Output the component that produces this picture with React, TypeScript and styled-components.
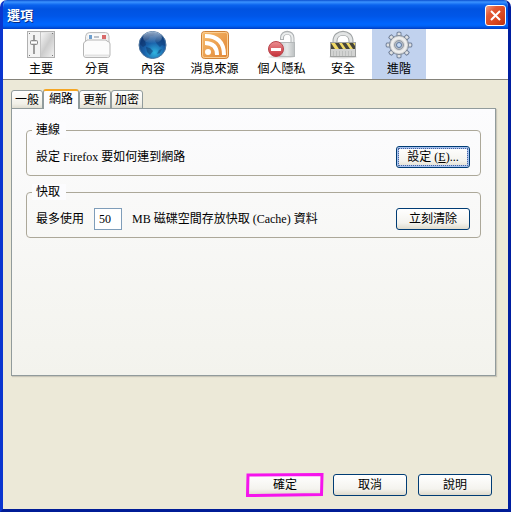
import React from "react";
import styled, { createGlobalStyle, css } from "styled-components";

const GlobalStyle = createGlobalStyle`
  * { box-sizing: border-box; }
  body {
    margin: 0;
    background: #fff;
    color: #000;
    font: 12px/16px "Liberation Serif", "Noto Sans CJK TC", serif;
  }
  button, input { font: inherit; color: inherit; }
`;

const Window = styled.main`
  display: flex;
  flex-direction: column;
  min-height: 100vh;
  background: #ece9d8;
  border: 3px solid #0a35cf;
  border-top: 0;
  border-right-color: #001ea0;
  border-bottom-color: #001c96;
  border-radius: 7px 7px 0 0;
  overflow: hidden;
`;

const TitleBar = styled.header`
  display: flex;
  align-items: center;
  justify-content: space-between;
  height: 29px;
  margin: 0 -3px;
  padding: 2px 5px 0 7px;
  background: linear-gradient(#0a4fd0 0, #3b93ff 2px, #0a63ee 5px, #0053e1 9px, #0056e8 16px, #0066ff 24px, #0062f5 26px, #003dc4 29px);
`;

const Title = styled.h1`
  margin: 0;
  color: #fff;
  font-size: 13px;
  line-height: 18px;
  font-weight: 700;
  text-shadow: 1px 1px 0 #0a2a80;
`;

const CloseButton = styled.button`
  display: grid;
  place-items: center;
  width: 21px;
  height: 21px;
  padding: 0;
  border: 1px solid #fff;
  border-radius: 3px;
  background: linear-gradient(135deg, #f0a088 0, #e25a36 30%, #d9451c 70%, #b83210 100%);
`;

const Toolbar = styled.nav`
  display: flex;
  gap: 2px;
  height: 51px;
  padding-left: 11px;
  background: #fff;
  border-bottom: 1px solid #85837a;
`;

const ToolButton = styled.button<{ $wide?: boolean; $selected?: boolean }>`
  display: flex;
  flex-direction: column;
  align-items: center;
  gap: 1px;
  flex: none;
  width: ${(p) => (p.$wide ? 65 : 54)}px;
  padding: 1px 0 0;
  border: 0;
  background: ${(p) => (p.$selected ? "#c1d2ee" : "transparent")};
  white-space: nowrap;

  svg { display: block; }
`;

const Content = styled.div`
  display: flex;
  flex: 1;
  flex-direction: column;
  padding: 9px 12px 0 8px;
`;

const TabList = styled.div`
  display: flex;
  align-items: flex-end;
  height: 20px;
  margin-bottom: -1px;
`;

const Tab = styled.button<{ $active?: boolean }>`
  height: 19px;
  padding: 0 3px;
  border: 1px solid #919b9c;
  border-radius: 3px 3px 0 0;
  background: linear-gradient(#fff, #f1f0e8 75%, #e0ded2);
  ${(p) =>
    p.$active &&
    css`
      position: relative;
      height: 20px;
      padding: 0 5px 3px;
      border-top: 2px solid #f5a623;
      border-bottom: 0;
      background: #fcfcfe;
    `}
`;

const Panel = styled.section`
  display: flex;
  flex: 1;
  flex-direction: column;
  gap: 8px;
  padding: 13px 14px;
  border: 1px solid #919b9c;
  background: linear-gradient(#fcfcfe, #f3f3ed);
  box-shadow: 1px 1px 1px #c9c6b9;
`;

const Group = styled.fieldset`
  min-width: 0;
  margin: 0;
  padding: 8px 10px 7px 9px;
  border: 1px solid #aca899;
  border-radius: 4px;
`;

const Legend = styled.legend`
  margin-left: -4px;
  padding: 0 6px 0 4px;
  background: #fcfcfe;
`;

const Row = styled.div`
  display: flex;
  align-items: center;
`;

const SizeInput = styled.input`
  width: 28px;
  height: 22px;
  margin: 0 10px;
  padding: 0 4px;
  border: 1px solid #7f9db9;
  border-radius: 0;
  background: #fff;
`;

const PushButton = styled.button<{ $focused?: boolean }>`
  width: 74px;
  height: 22px;
  padding: 0;
  border: 1px solid #003c74;
  border-radius: 3px;
  background: linear-gradient(#fff, #f4f3ee 70%, #dfdbcd);
  white-space: nowrap;
  ${(p) =>
    p.$focused &&
    css`
      box-shadow: inset 0 0 0 2px #a9c3f0;
      outline: 1px dotted #4a66a0;
      outline-offset: -3px;
    `}
`;

const RowButton = styled(PushButton)`
  margin-left: auto;
`;

const Footer = styled.footer`
  display: flex;
  justify-content: flex-end;
  gap: 11px;
  margin-top: 98px;
  padding: 0 16px 13px;
`;

const Marked = styled.div`
  position: relative;
  display: flex;

  svg {
    position: absolute;
    inset: -1px -2px;
    pointer-events: none;
  }
`;

const Plain = styled(PushButton)`
  border-color: transparent;
`;

function MainIcon() {
  return (
    <svg width="30" height="30" viewBox="0 0 30 30" aria-hidden="true">
      <defs>
        <linearGradient id="metal" x2="1" y2="1">
          <stop offset="0" stopColor="#f8f8f8" />
          <stop offset=".5" stopColor="#cccccc" />
          <stop offset="1" stopColor="#f1f1f1" />
        </linearGradient>
      </defs>
      <rect x="1.5" y="1.5" width="27" height="26" fill="#e4e4e4" stroke="#b0b0b0" />
      <rect x="2" y="2" width="12" height="25" fill="#f3f3f3" />
      <rect x="14" y="3" width="14" height="24" fill="url(#metal)" />
      <path d="M14.5 2v25" stroke="#c4c4c4" />
      <path d="M8 5v19" stroke="#777" strokeWidth="1.4" />
      <rect x="4.5" y="10.5" width="7" height="4" rx="1" fill="#ddd" stroke="#888" />
      <path d="M5 12.5h6" stroke="#fff" />
      <path d="M3 3.5h1M26 3.5h1M3 25.5h1M26 25.5h1" stroke="#777" />
    </svg>
  );
}

function TabsIcon() {
  return (
    <svg width="30" height="30" viewBox="0 0 30 30" aria-hidden="true">
      <path d="M3.5 13V6.500q.5-4 4-4h16q3.500 0 3.500 4V13" fill="#f1f1f1" stroke="#bdbdbd" />
      <rect x="6" y="4" width="18" height="6" fill="#fafafa" />
      <rect x="7" y="5" width="3" height="4" fill="#6f9fcd" />
      <path d="M12 7h5" stroke="#a9afb8" strokeWidth="1.5" />
      <rect x="20" y="5" width="4" height="4" fill="#d96a6a" />
      <path d="M1.500 14q0-2 2-2.500 1-.3 1.500-1.500h19q.5 1.200 2 1.500 2 .5 2 2.500v11q0 2.500-2.500 2.500h-21.500q-2.500 0-2.500-2.500Z" fill="#fcfcfc" stroke="#b5b5b5" />
      <path d="M3 25.500h24" stroke="#e2e2e2" strokeWidth="2" />
    </svg>
  );
}

function GlobeIcon() {
  return (
    <svg width="30" height="30" viewBox="0 0 30 30" aria-hidden="true">
      <defs>
        <radialGradient id="sea" cx=".58" cy=".78" r=".75">
          <stop offset="0" stopColor="#2fb4e0" />
          <stop offset=".5" stopColor="#1a62aa" />
          <stop offset="1" stopColor="#123a78" />
        </radialGradient>
        <linearGradient id="shine" x2="0" y2="1">
          <stop offset="0" stopColor="#dcecf8" stopOpacity=".65" />
          <stop offset="1" stopColor="#dcecf8" stopOpacity="0" />
        </linearGradient>
      </defs>
      <circle cx="14.500" cy="15" r="13.500" fill="url(#sea)" stroke="#4c739c" />
      <path d="M4 9c3-5 8-7 13-6l-2 3-3 0-1 3-4 2 1 4-3 2-3-3ZM8 17l4 1 3 3-3 4-3-3Z" fill="#0b2e66" opacity=".5" />
      <path d="m18 8 4-3c4 3 5 7 5 11l-3-1-2 2-3-3-2-3ZM21 20l3-1-2 4-3 1Z" fill="#0d3a75" opacity=".5" />
      <ellipse cx="14.500" cy="7.500" rx="9.500" ry="6" fill="url(#shine)" />
    </svg>
  );
}

function FeedIcon() {
  return (
    <svg width="30" height="30" viewBox="0 0 30 30" aria-hidden="true">
      <defs>
        <linearGradient id="feed" x2="1" y2="1">
          <stop stopColor="#f7bd6e" />
          <stop offset="1" stopColor="#e08434" />
        </linearGradient>
      </defs>
      <rect x="1.500" y="1.500" width="27" height="27" rx="3" fill="url(#feed)" stroke="#cf8238" />
      <rect x="2.500" y="2.500" width="25" height="25" rx="2" fill="none" stroke="#fbcf94" />
      <circle cx="8" cy="22" r="3" fill="#fff" />
      <path d="M5 13q12 0 12 12M5 6q19 0 19 19" fill="none" stroke="#fff" strokeWidth="4" />
    </svg>
  );
}

function PrivacyIcon() {
  return (
    <svg width="30" height="30" viewBox="0 0 30 30" aria-hidden="true">
      <defs>
        <linearGradient id="lock" x2="1" y2="0">
          <stop stopColor="#c9cccd" />
          <stop offset=".5" stopColor="#e6e8e8" />
          <stop offset="1" stopColor="#bcc0c1" />
        </linearGradient>
        <linearGradient id="stop" x2="0" y2="1">
          <stop stopColor="#ec8f92" />
          <stop offset="1" stopColor="#c52f38" />
        </linearGradient>
      </defs>
      <ellipse cx="14" cy="27" rx="13" ry="1.500" fill="#e4e4e4" />
      <path d="M15 10V8c0-7 10.500-7 10.500 0v6" fill="none" stroke="#adb1b3" strokeWidth="4" />
      <path d="M15 9V8c0-6.500 10.500-6.500 10.500 0v6" fill="none" stroke="#eceeee" strokeWidth="2" />
      <rect x="12.500" y="12.500" width="15" height="14" fill="url(#lock)" stroke="#b4b8b9" />
      <circle cx="9" cy="19" r="7.500" fill="url(#stop)" stroke="#b8454c" />
      <rect x="4" y="18" width="10" height="3" fill="#fff" />
    </svg>
  );
}

function SecurityIcon() {
  return (
    <svg width="30" height="30" viewBox="0 0 30 30" aria-hidden="true">
      <ellipse cx="15" cy="27" rx="14" ry="1.500" fill="#ddd" />
      <path d="M7 14V11c0-10.500 16-10.500 16 0v3" fill="none" stroke="#a0a4a5" strokeWidth="5" />
      <path d="M7 14V11c0-10 16-10 16 0v3" fill="none" stroke="#e2e4e4" strokeWidth="3" />
      <rect x="2.500" y="12.500" width="25" height="14" fill="#d2d3d2" stroke="#a0a2a1" />
      <rect x="3" y="13" width="24" height="6" fill="#f0d966" />
      <path d="M3 13l4 6H3ZM7 13h4l4 6h-4ZM14 13h4l4 6h-4ZM21 13h4l2 3v3h-2Z" fill="#45443c" />
      <path d="M5.500 21v5M8.500 21v5M11.500 21v5M14.500 21v5M17.500 21v5M20.500 21v5M23.500 21v5" stroke="#bdbfbe" />
    </svg>
  );
}

function AdvancedIcon() {
  const teeth = [0, 45, 90, 135, 180, 225, 270, 315];
  return (
    <svg width="30" height="30" viewBox="0 0 30 30" aria-hidden="true">
      {teeth.map((angle) => (
        <path key={angle} d="M13 7v-4.500q2-1 4 0V7Z" fill="#dfe1e3" stroke="#71809a" transform={`rotate(${angle} 15 15)`} />
      ))}
      <circle cx="15" cy="15" r="9.500" fill="#d9dadb" stroke="#7f8996" />
      <circle cx="15" cy="15" r="7" fill="none" stroke="#efefee" strokeWidth="2" />
      <circle cx="15" cy="15" r="4.500" fill="#b4bbc4" stroke="#949ca6" />
      <circle cx="15" cy="15" r="2.500" fill="#c7dbf5" stroke="#5f7aa0" />
    </svg>
  );
}

const tools = [
  { label: "主要", Icon: MainIcon },
  { label: "分頁", Icon: TabsIcon },
  { label: "內容", Icon: GlobeIcon },
  { label: "消息來源", Icon: FeedIcon, wide: true },
  { label: "個人隱私", Icon: PrivacyIcon, wide: true },
  { label: "安全", Icon: SecurityIcon },
  { label: "進階", Icon: AdvancedIcon, selected: true },
];

const tabs = ["一般", "網路", "更新", "加密"];

export default function App() {
  return (
    <>
      <GlobalStyle />
      <Window>
        <TitleBar>
          <Title>選項</Title>
          <CloseButton aria-label="關閉">
            <svg width="13" height="13" viewBox="0 0 13 13" aria-hidden="true">
              <path d="m2 2 9 9M11 2l-9 9" stroke="#fff" strokeWidth="2" />
            </svg>
          </CloseButton>
        </TitleBar>
        <Toolbar>
          {tools.map(({ label, Icon, wide, selected }) => (
            <ToolButton key={label} $wide={wide} $selected={selected} aria-pressed={!!selected}>
              <Icon />
              {label}
            </ToolButton>
          ))}
        </Toolbar>
        <Content>
          <TabList role="tablist">
            {tabs.map((tab) => (
              <Tab key={tab} role="tab" aria-selected={tab === "網路"} $active={tab === "網路"}>
                {tab}
              </Tab>
            ))}
          </TabList>
          <Panel role="tabpanel">
            <Group>
              <Legend>連線</Legend>
              <Row>
                <span>設定 Firefox 要如何連到網路</span>
                <RowButton $focused>
                  設定 (<u>E</u>)...
                </RowButton>
              </Row>
            </Group>
            <Group>
              <Legend>快取</Legend>
              <Row>
                <label htmlFor="cache-size">最多使用</label>
                <SizeInput id="cache-size" defaultValue="50" />
                <span>MB 磁碟空間存放快取 (Cache) 資料</span>
                <RowButton>立刻清除</RowButton>
              </Row>
            </Group>
          </Panel>
        </Content>
        <Footer>
          <Marked>
            <Plain>確定</Plain>
            <svg width="78" height="24" viewBox="0 0 78 24" aria-hidden="true">
              <path d="M2 2 76 1.500 75.500 21.500 1.500 22.500Z" fill="none" stroke="#f514ec" strokeWidth="3" />
            </svg>
          </Marked>
          <PushButton>取消</PushButton>
          <PushButton>說明</PushButton>
        </Footer>
      </Window>
    </>
  );
}
